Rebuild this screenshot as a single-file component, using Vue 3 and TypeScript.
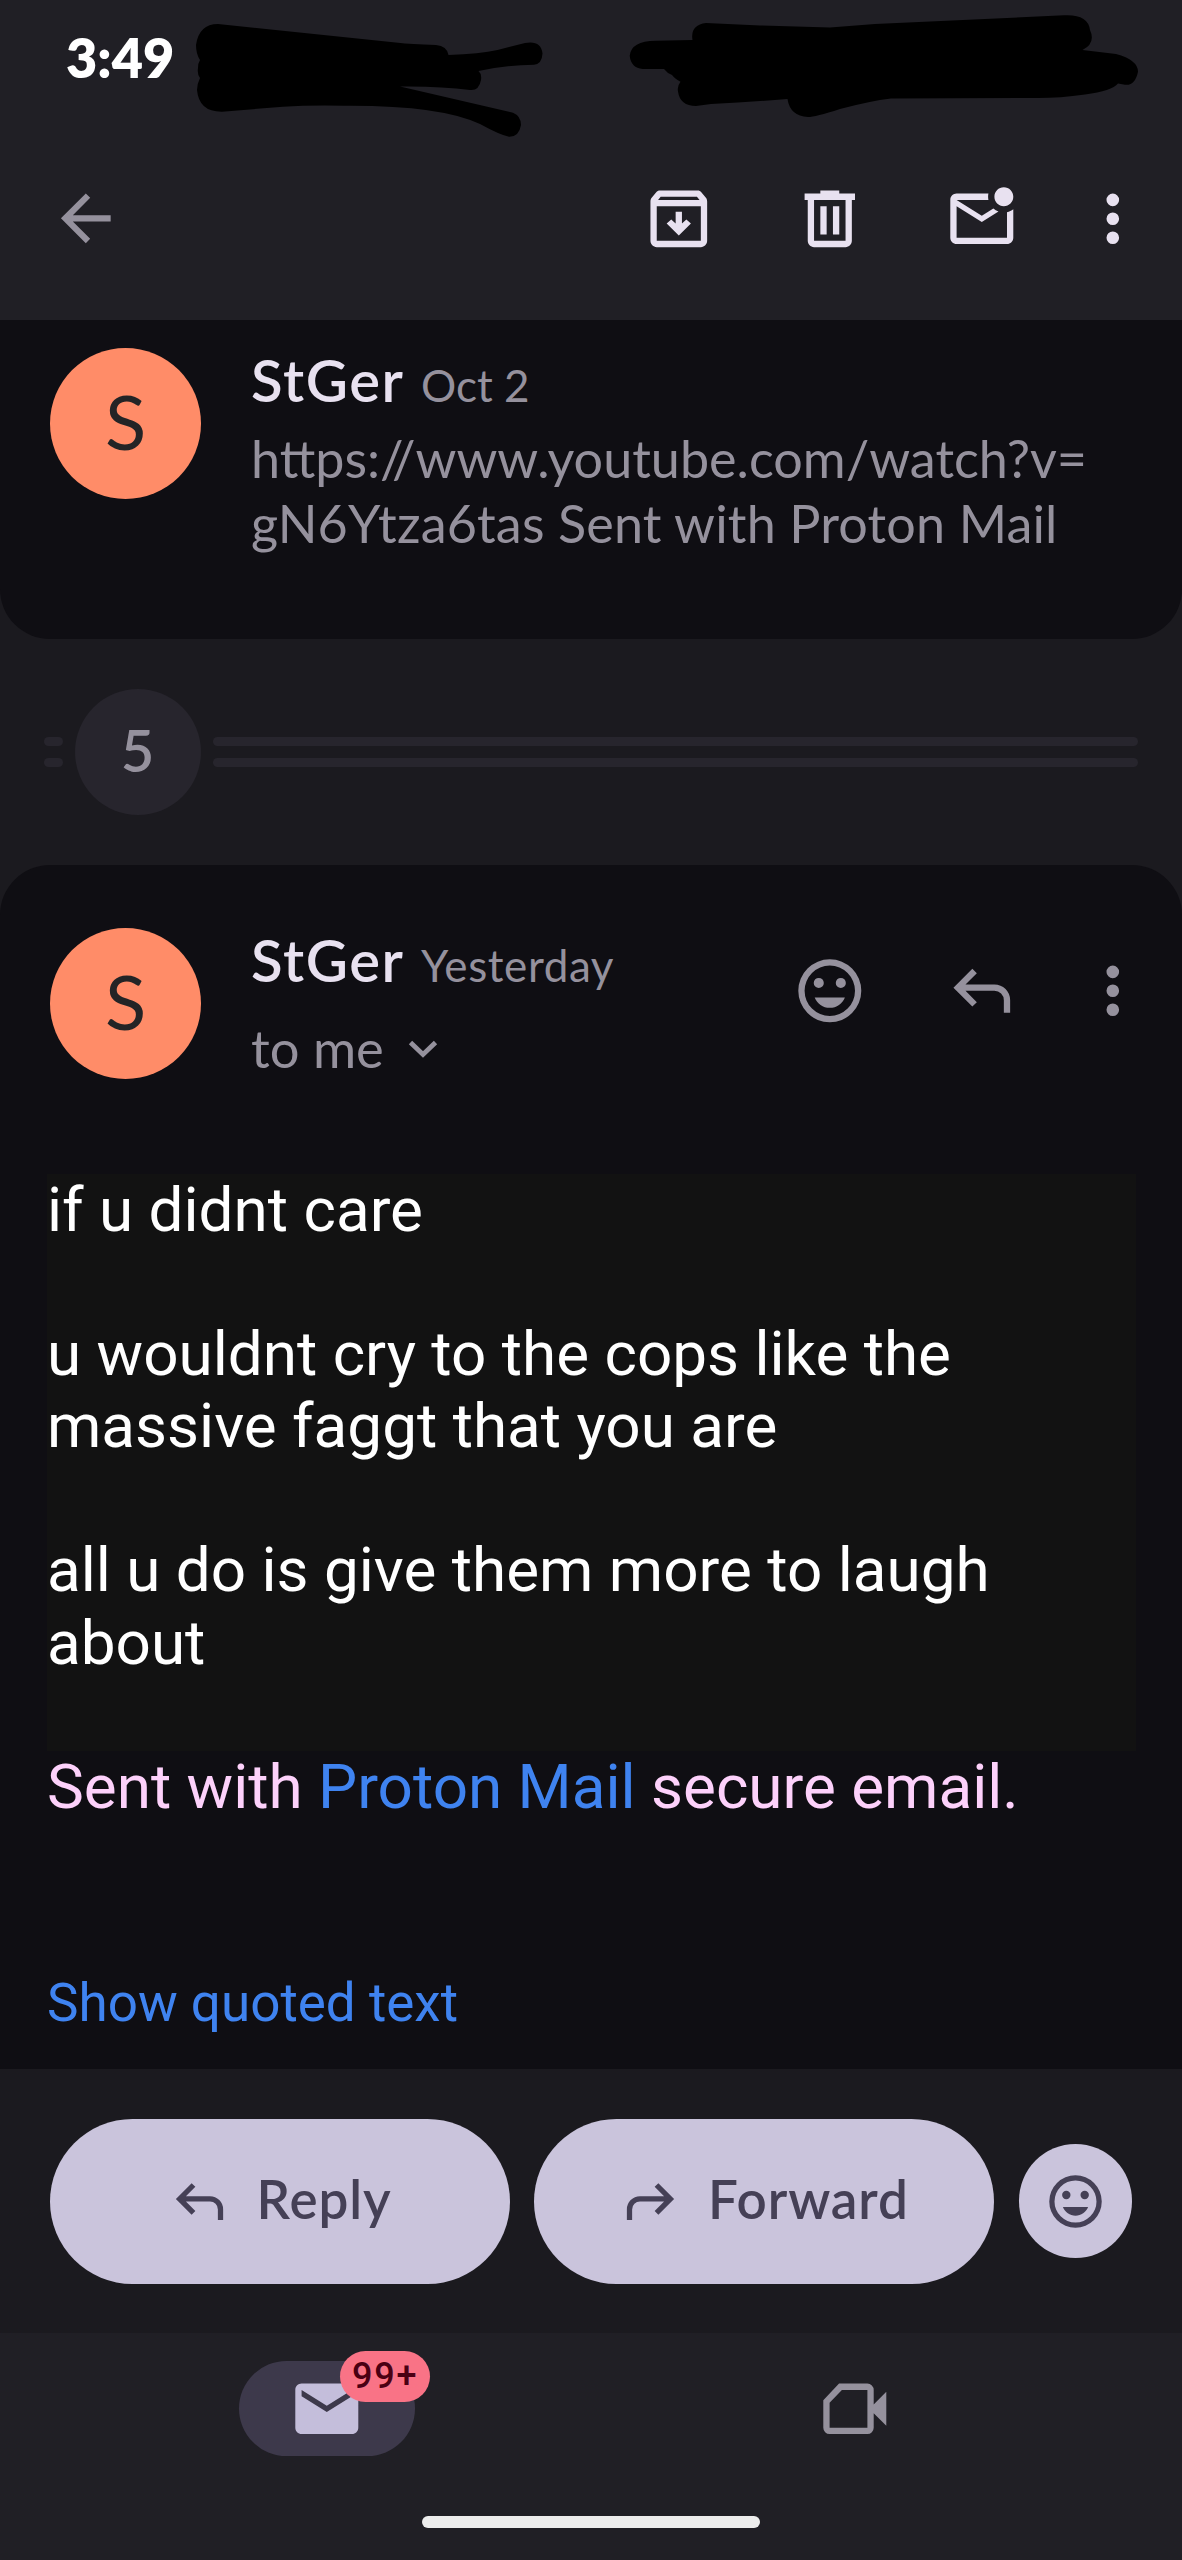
<script setup lang="ts">
interface BodyLine {
  id: number
  text: string
}

const bodyLines: BodyLine[] = [
  'if u didnt care',
  '',
  'u wouldnt cry to the cops like the',
  'massive faggt that you are',
  '',
  'all u do is give them more to laugh',
  'about',
  '',
].map((text, id) => ({ id, text }))

const snippet: string[] = ['https://www.youtube.com/watch?v=', 'gN6Ytza6tas Sent with Proton Mail']

const icons = {
  back: 'M20 11H7.83l5.59-5.59L12 4l-8 8 8 8 1.41-1.41L7.83 13H20v-2z',
  archive:
    'm20.54 5.23-1.39-1.68C18.88 3.21 18.47 3 18 3H6c-.47 0-.88.21-1.16.55L3.46 5.23C3.17 5.57 3 6.02 3 6.5V19c0 1.1.9 2 2 2h14c1.1 0 2-.9 2-2V6.5c0-.48-.17-.93-.46-1.27zM6.24 5h11.52l.83 1H5.42l.82-1zM5 19V8h14v11H5zM11 9.8h2v3.7l1.4-1.3 1.45 1.3L12 17.3l-3.85-3.8 1.45-1.3 1.4 1.3z',
  trash:
    'M15 4V3H9v1H4v2h1v13c0 1.1.9 2 2 2h10c1.1 0 2-.9 2-2V6h1V4h-5zm2 15H7V6h10v13zM9 8h2v9H9V8zm4 0h2v9h-2V8z',
  unread:
    'M22 8.98V18c0 1.1-.9 2-2 2H4c-1.1 0-2-.9-2-2V6c0-1.1.9-2 2-2h10.1c-.06.32-.1.66-.1 1s.04.68.1 1H4l8 5 3.67-2.29c.47.43 1.02.76 1.63.98L12 13 4 8v10h16V9.9c.74-.15 1.42-.48 2-.92zM16 5c0 1.66 1.34 3 3 3s3-1.34 3-3-1.34-3-3-3-3 1.34-3 3z',
  more: 'M12 4a2 2 0 1 0 0 4 2 2 0 0 0 0-4zm0 6a2 2 0 1 0 0 4 2 2 0 0 0 0-4zm0 6a2 2 0 1 0 0 4 2 2 0 0 0 0-4z',
  smile:
    'M12 2a10 10 0 1 0 0 20 10 10 0 0 0 0-20zm0 18a8 8 0 1 1 0-16 8 8 0 0 1 0 16zM8.5 7.9a1.6 1.6 0 1 0 0 3.2 1.6 1.6 0 0 0 0-3.2zm7 0a1.6 1.6 0 1 0 0 3.2 1.6 1.6 0 0 0 0-3.2zM7.2 14.1h9.6c-.8 2-2.6 3.3-4.8 3.3s-4-1.3-4.8-3.3z',
  reply:
    'M19 19v-4q0-1.25-.875-2.125T16 12H6.825l3.6 3.6L9 17l-6-6 6-6 1.425 1.4-3.6 3.6H16q2.075 0 3.5375 1.4625T21 15v4h-2z',
  mail: 'M20 4H4c-1.1 0-2 .9-2 2v12c0 1.1.9 2 2 2h16c1.1 0 2-.9 2-2V6c0-1.1-.9-2-2-2zm0 4-8 5-8-5V6l8 5 8-5v2z',
  video:
    'M7 4h9a2 2 0 0 1 2 2v4.6l4-4v10.8l-4-4V18a2 2 0 0 1-2 2H4a2 2 0 0 1-2-2V9.3zM7.9 6 4 10.1V18h12V6z',
}

const toolbar = [icons.archive, icons.trash, icons.unread, icons.more]
const messageActions = [icons.smile, icons.reply, icons.more]
</script>

<template>
  <div class="screen">
    <header class="top">
      <div class="status">
        <span class="clock">3:49</span>
        <svg class="marks" viewBox="0 0 1182 150" width="1182" height="150">
          <path
            d="M218 24 398 42.700Q410 44 436 45Q447 46 448.500 55Q480 54 497.500 50L525 43Q541 40 542.500 53.500Q542 64 534 64.700Q505 65 478.500 71Q482 74 481 80Q479 91 470 90Q440 86 400 86.500L513 112.700Q521 116 521 125Q519 137 509 136.700Q500 135 480 124Q440 105 344 105.700Q310 105 283 106.700L222 111.700Q199 112 197 90Q197 84 200 78Q197 74 198 68Q198 63 200 60Q196 54 196 45Q199 24 218 24Z"
          />
          <path
            d="M692.500 40Q690 25 706 23L760 25.500 830 27.500 875 24 1064 15.300Q1088 14 1090 30Q1096 43 1082.500 50L1116 54Q1138 60 1138 71.700Q1135 86 1125 84.700L1118 83.500Q1112 91 1085 94.500Q1060 98 1038 98L891 98.500Q870 101 840 109Q815 117 808 117Q790 116 787.500 99Q750 102 711 104L696 106Q680 106 678 91.500Q677 86 680.500 81.700Q674 78 672 75Q667 73 664 69H642.700Q631 68 629.700 55.700Q631 41 655.700 40.700Z"
          />
        </svg>
      </div>
      <nav class="toolbar">
        <svg class="icon muted" viewBox="0 0 24 24"><path :d="icons.back" /></svg>
        <div class="actions bright">
          <svg v-for="(d, i) in toolbar" :key="i" class="icon" viewBox="0 0 24 24">
            <path :d="d" fill-rule="evenodd" />
          </svg>
        </div>
      </nav>
    </header>

    <article class="card collapsed">
      <div class="avatar"><span>S</span></div>
      <div class="meta">
        <div class="who"><span class="name">StGer</span><span class="date">Oct 2</span></div>
        <p class="snippet">
          <span v-for="s in snippet" :key="s">{{ s }}</span>
        </p>
      </div>
    </article>

    <div class="fold">
      <div class="rules short"><i></i><i></i></div>
      <div class="count-chip"><span class="count">5</span></div>
      <div class="rules long"><i></i><i></i></div>
    </div>

    <article class="card open">
      <div class="head">
        <div class="avatar"><span>S</span></div>
        <div class="meta">
          <div class="who"><span class="name">StGer</span><span class="date yesterday">Yesterday</span></div>
          <div class="recipient">
            <span>to me</span>
            <svg viewBox="0 0 32 20" width="32" height="20">
              <path d="M3.500 3.500 16 15.500 28.500 3.500" fill="none" stroke="currentColor" stroke-width="4.800" />
            </svg>
          </div>
        </div>
        <div class="actions muted">
          <svg v-for="(d, i) in messageActions" :key="i" class="icon" viewBox="0 0 24 24">
            <path :d="d" fill-rule="evenodd" />
          </svg>
        </div>
      </div>
      <div class="body">
        <div class="shaded">
          <div v-for="l in bodyLines" :key="l.id" class="line">{{ l.text }}</div>
        </div>
        <div class="signature">Sent with <a>Proton Mail</a> secure email.</div>
        <div class="quoted">Show quoted text</div>
      </div>
    </article>

    <section class="respond">
      <button class="pill">
        <svg class="icon small" viewBox="0 0 24 24"><path :d="icons.reply" /></svg>
        <span class="label">Reply</span>
      </button>
      <button class="pill forward">
        <svg class="icon small flip" viewBox="0 0 24 24"><path :d="icons.reply" /></svg>
        <span class="label">Forward</span>
      </button>
      <button class="react">
        <svg class="icon small" viewBox="0 0 24 24"><path :d="icons.smile" fill-rule="evenodd" /></svg>
      </button>
    </section>

    <footer class="bottom">
      <div class="tabs">
        <div class="tab">
          <div class="tab-pill">
            <svg class="icon" viewBox="0 0 24 24"><path :d="icons.mail" /></svg>
            <div class="badge"><span>99+</span></div>
          </div>
        </div>
        <div class="tab muted">
          <svg class="icon" viewBox="0 0 24 24"><path :d="icons.video" fill-rule="evenodd" /></svg>
        </div>
      </div>
      <div class="home-bar"></div>
    </footer>
  </div>
</template>

<style>
body {
  background: #1b1a1f;
}
</style>

<style scoped>
.screen {
  width: 1182px;
  height: 2560px;
  overflow: hidden;
  display: flex;
  flex-direction: column;
  background: #1b1a1f;
  font-family: Lato, Roboto, sans-serif;
}
.icon {
  width: 75.6px;
  height: 75.6px;
  flex: none;
  display: block;
  fill: currentColor;
}
.icon.small {
  width: 63px;
  height: 63px;
}
.flip {
  transform: scaleX(-1);
}
.muted {
  color: #95919d;
}
.bright {
  color: #e8e1f0;
}
.top {
  height: 320px;
  background: #201f25;
  display: flex;
  flex-direction: column;
}
.status {
  height: 181px;
  padding: 27.5px 0 0 66px;
  box-sizing: border-box;
  position: relative;
}
.clock {
  display: inline-block;
  font-size: 54px;
  line-height: 60px;
  font-weight: 800;
  color: #fff;
}
.marks {
  position: absolute;
  left: 0;
  top: 0;
  fill: #000;
}
.toolbar {
  display: flex;
  justify-content: space-between;
  padding: 0 31px 0 48px;
}
.toolbar > .icon {
  height: 74.6px;
}
.actions {
  display: flex;
  gap: 75.7px;
}
.actions .icon:last-child {
  margin-left: -19.5px;
}
.card {
  background: #0f0e13;
  flex: none;
}
.collapsed {
  height: 319px;
  border-radius: 0 0 50px 50px;
  padding: 28px 0 0 50px;
  box-sizing: border-box;
  display: flex;
}
.avatar {
  width: 151px;
  height: 151px;
  border-radius: 50%;
  background: #ff8c68;
  color: #232426;
  display: flex;
  align-items: center;
  justify-content: center;
  font-size: 76px;
  line-height: 90px;
  padding-bottom: 6px;
  box-sizing: border-box;
  flex: none;
}
.meta {
  margin: 1.5px 0 0 50px;
}
.who {
  display: flex;
  align-items: baseline;
  height: 60px;
  line-height: 60px;
}
.name {
  font-size: 58px;
  font-weight: 600;
  letter-spacing: 1.6px;
  color: #e8e1f0;
}
.date {
  font-size: 44px;
  color: #95919d;
  margin-left: 16.5px;
}
.yesterday {
  letter-spacing: 0.6px;
}
.snippet {
  margin: 16px 0 0;
  font-size: 52.1px;
  line-height: 65px;
  color: #95919d;
  display: flex;
  flex-direction: column;
  align-items: flex-start;
  white-space: nowrap;
}
.snippet span:last-child {
  letter-spacing: 0.15px;
}
.fold {
  height: 226px;
  flex: none;
  display: flex;
  align-items: center;
  padding: 0 44px;
}
.rules {
  display: flex;
  flex-direction: column;
  gap: 12px;
}
.rules i {
  display: block;
  height: 9px;
  border-radius: 4.5px;
  background: #27252d;
}
.short {
  width: 19px;
}
.long {
  flex: 1;
}
.count-chip {
  width: 126px;
  height: 126px;
  border-radius: 50%;
  background: #27252d;
  margin: 0 12px 0 12px;
  display: flex;
  align-items: center;
  justify-content: center;
  padding: 0 1px 5px 0;
  box-sizing: border-box;
  color: #95919d;
  font-size: 58px;
  font-weight: 600;
}
.open {
  height: 1204px;
  border-radius: 50px 50px 0 0;
  padding-top: 63px;
  box-sizing: border-box;
}
.head {
  display: flex;
  padding: 0 31px 0 50px;
  height: 245.5px;
  box-sizing: border-box;
}
.head .actions {
  margin: 25px 0 0 auto;
}
.recipient {
  margin-top: 28px;
  display: flex;
  align-items: center;
  font-size: 52.5px;
  line-height: 60px;
  color: #95919d;
}
.recipient svg {
  margin: 3px 0 0 23.5px;
}
.body {
  padding: 0 46px 0 47px;
  font-family: Roboto, sans-serif;
  font-size: 62px;
  line-height: 72.2px;
}
.shaded {
  background: #121212;
  color: #fff;
}
.line {
  height: 72.2px;
  white-space: nowrap;
}
.signature {
  color: #fdd1fb;
}
.signature a,
.quoted {
  color: #3f83f0;
}
.quoted {
  font-size: 53px;
  margin-top: 143.5px;
}
.respond {
  height: 264px;
  flex: none;
  display: flex;
  align-items: center;
  gap: 24.4px;
  padding-left: 50px;
}
button {
  border: 0;
  padding: 0;
  background: #cac4dc;
  color: #454056;
  font-family: inherit;
  display: flex;
  align-items: center;
  justify-content: center;
}
.pill {
  width: 460px;
  height: 165px;
  border-radius: 83px;
  box-sizing: border-box;
  justify-content: flex-start;
  padding-left: 117.6px;
  gap: 26px;
}
.pill.forward {
  padding-left: 84.6px;
}
.label {
  font-size: 53px;
  font-weight: 600;
  letter-spacing: 0.9px;
  padding-bottom: 5.5px;
}
.react {
  width: 113.5px;
  height: 113.5px;
  border-radius: 50%;
}
.bottom {
  height: 227px;
  flex: none;
  background: #201f25;
}
.tabs {
  display: flex;
  padding: 28px 63px 0;
}
.tab {
  flex: 1;
  height: 95px;
  display: flex;
  align-items: center;
  justify-content: center;
}
.tab-pill {
  width: 175.5px;
  height: 95px;
  border-radius: 48px;
  background: #3d394b;
  color: #c4bedb;
  display: flex;
  align-items: center;
  justify-content: center;
  position: relative;
}
.badge {
  position: absolute;
  left: 101px;
  top: -10.5px;
  width: 90px;
  height: 51px;
  border-radius: 26px;
  background: #f97386;
  color: #4a0013;
  display: flex;
  align-items: center;
  justify-content: center;
  font: 500 36px Roboto, sans-serif;
  letter-spacing: 1.8px;
}
.home-bar {
  width: 338px;
  height: 12px;
  border-radius: 6px;
  background: #ededed;
  margin: 60px auto 0;
}
</style>
